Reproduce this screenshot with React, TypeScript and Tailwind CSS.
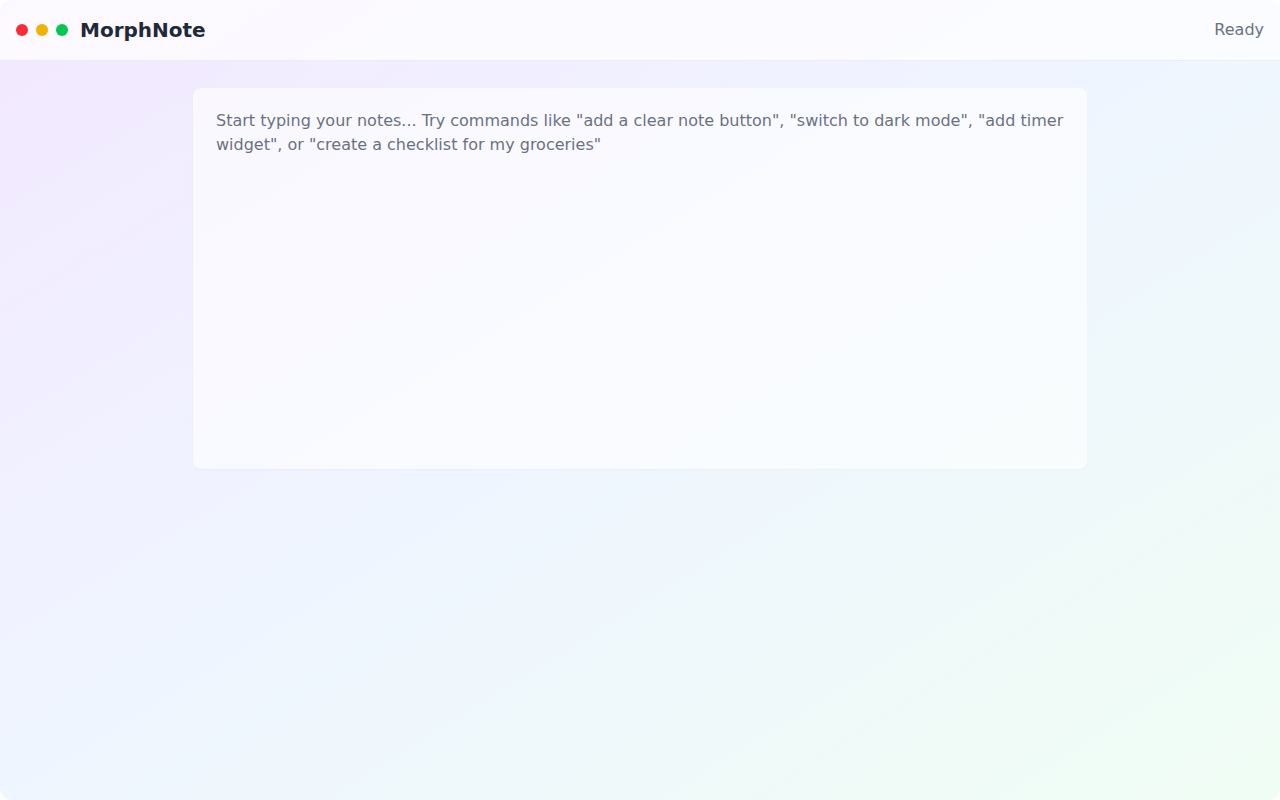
import React from 'react';

export default function App() {
  const [note, setNote] = React.useState('');

  return (
    <div className="bg-white">
      <div className="min-h-screen rounded-xl overflow-hidden bg-gradient-to-br from-purple-100 via-blue-50 to-green-50 flex flex-col font-['DejaVu_Sans',sans-serif]">
        <header className="h-[61px] flex items-center justify-between px-4 bg-white/70 border-b border-gray-200/70">
          <div className="flex items-center gap-3">
            <div className="flex items-center gap-2">
              <span className="w-3 h-3 rounded-full bg-red-500"></span>
              <span className="w-3 h-3 rounded-full bg-yellow-500"></span>
              <span className="w-3 h-3 rounded-full bg-green-500"></span>
            </div>
            <h1 className="text-xl font-bold text-gray-800">MorphNote</h1>
          </div>
          <span className="text-base text-gray-500">Ready</span>
        </header>

        <main className="flex-1 pt-[27px] px-6">
          <div className="max-w-[894px] mx-auto bg-white/60 rounded-lg shadow-[0_1px_3px_rgba(0,0,0,0.03)]">
            <textarea
              value={note}
              onChange={e => setNote(e.target.value)}
              placeholder={'Start typing your notes... Try commands like "add a clear note button", "switch to dark mode", "add timer widget", or "create a checklist for my groceries"'}
              className="w-full h-[381px] block bg-transparent resize-none outline-none px-[23px] pt-[21px] pb-5 text-base leading-6 text-gray-700 placeholder:text-gray-500"
            ></textarea>
          </div>
        </main>
      </div>
    </div>
  );
}
